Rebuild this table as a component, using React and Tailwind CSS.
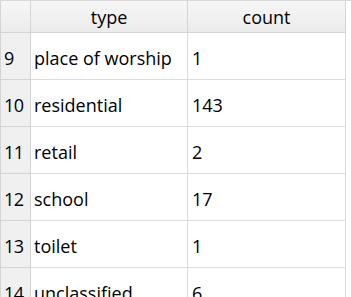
export default function App() {
  const rows = [
    ["9", "place of worship", "1"],
    ["10", "residential", "143"],
    ["11", "retail", "2"],
    ["12", "school", "17"],
    ["13", "toilet", "1"],
    ["14", "unclassified", "6"],
  ];
  return (
    <div
      className="w-[351px] h-[297px] overflow-hidden bg-white text-[18px] leading-[24px] text-[#000]"
      style={{ fontFamily: '"Open Sans", "Noto Sans", sans-serif' }}
    >
      <div className="flex h-[33px] border-t border-[#d9d9d9]">
        <div className="w-[31px] shrink-0 border-b border-r border-l border-[#d4d4d4] bg-gradient-to-b from-[#f6f6f6] to-[#ececec]" />
        <div className="w-[157px] shrink-0 flex items-center justify-center border-b border-r border-[#d4d4d4] bg-gradient-to-b from-[#f6f6f6] to-[#ececec]">
          type
        </div>
        <div className="w-[158px] shrink-0 flex items-center justify-center border-b border-r border-[#d4d4d4] bg-gradient-to-b from-[#f6f6f6] to-[#ececec]">
          count
        </div>
      </div>
      {rows.map((r) => (
        <div key={r[0]} className="flex h-[47px]">
          <div className="w-[31px] shrink-0 flex items-center pt-[3px] pl-[3px] border-b border-r border-l border-[#d4d4d4] bg-[#f0f0f0] tracking-[-0.5px]">
            {r[0]}
          </div>
          <div className="w-[157px] shrink-0 flex items-center pt-[3px] pl-[3px] border-b border-r border-[#dcdcdc]">
            {r[1]}
          </div>
          <div className="w-[158px] shrink-0 flex items-center pt-[3px] pl-[4px] border-b border-r border-[#dcdcdc]">
            {r[2]}
          </div>
        </div>
      ))}
    </div>
  );
}
